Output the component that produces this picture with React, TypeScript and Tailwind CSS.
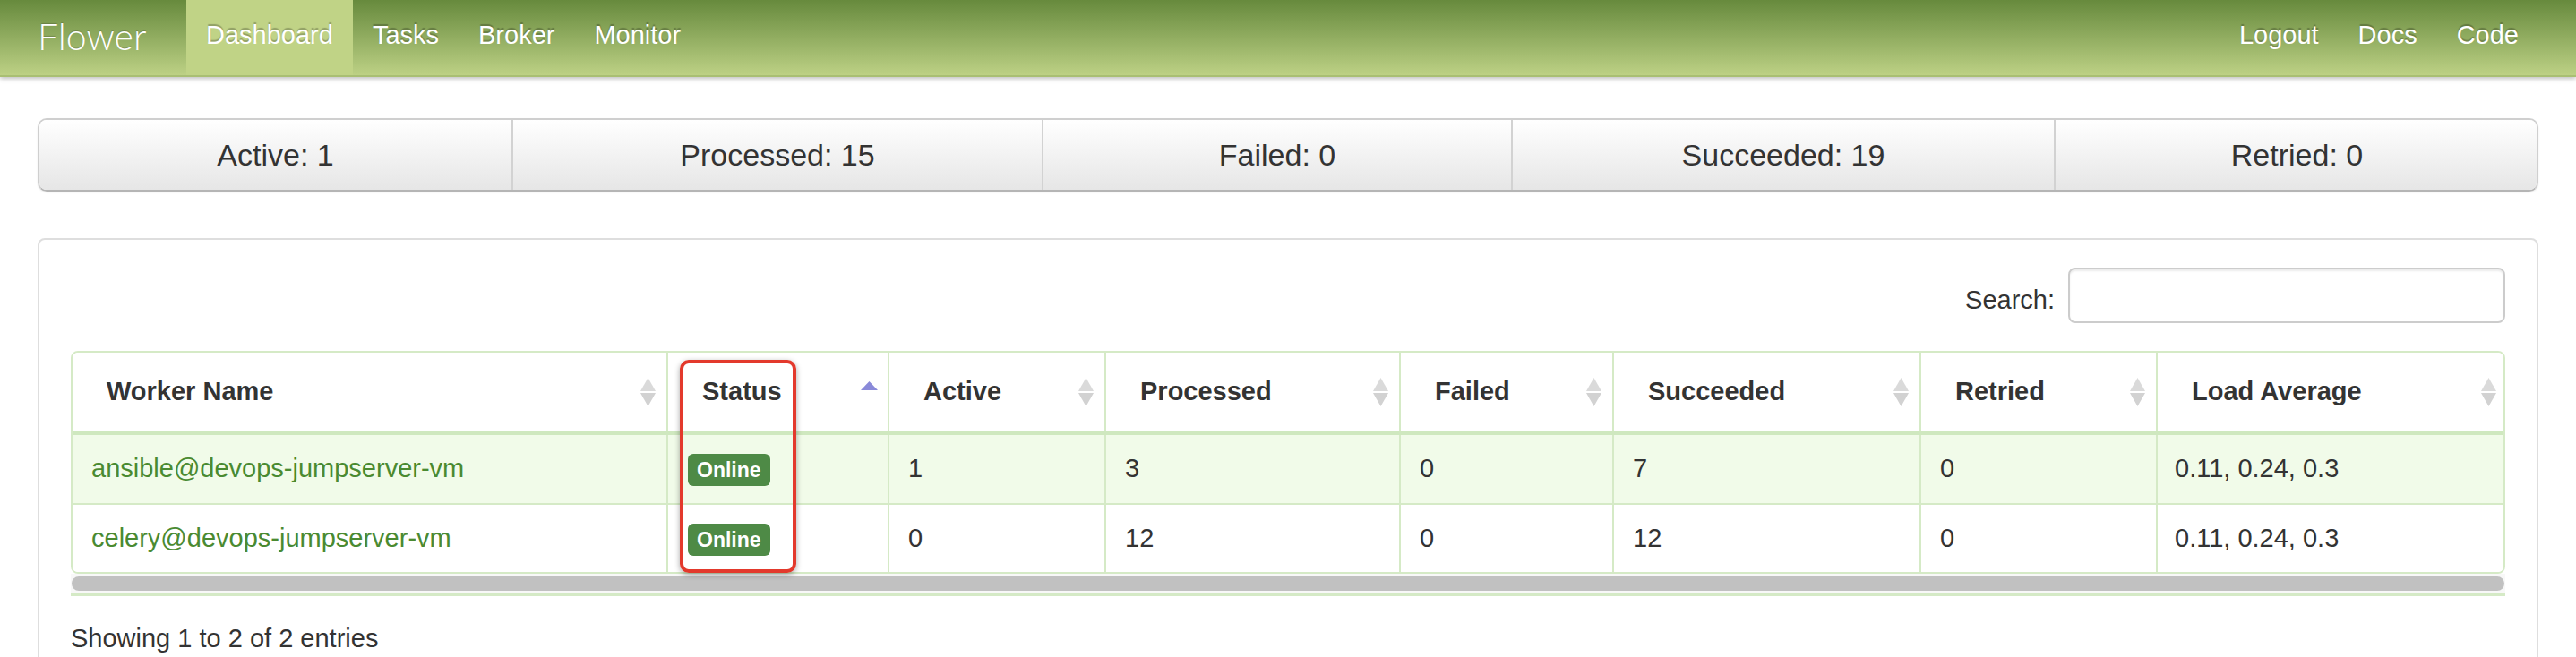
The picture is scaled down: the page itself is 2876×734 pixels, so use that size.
import React from 'react';

const stats = [
  { label: 'Active: 1', width: 'w-[527px]' },
  { label: 'Processed: 15', width: 'w-[592px]' },
  { label: 'Failed: 0', width: 'w-[524px]' },
  { label: 'Succeeded: 19', width: 'w-[606px]' },
  { label: 'Retried: 0', width: 'w-[541px]' },
];

const columns = [
  { name: 'Worker Name', width: 'w-[664px]', sort: 'both' },
  { name: 'Status', width: 'w-[247px]', sort: 'asc' },
  { name: 'Active', width: 'w-[242px]', sort: 'both' },
  { name: 'Processed', width: 'w-[329px]', sort: 'both' },
  { name: 'Failed', width: 'w-[238px]', sort: 'both' },
  { name: 'Succeeded', width: 'w-[343px]', sort: 'both' },
  { name: 'Retried', width: 'w-[264px]', sort: 'both' },
  { name: 'Load Average', width: 'w-[391px]', sort: 'both' },
];

const workers = [
  { name: 'ansible@devops-jumpserver-vm', active: 1, processed: 3, failed: 0, succeeded: 7, retried: 0, load: '0.11, 0.24, 0.3' },
  { name: 'celery@devops-jumpserver-vm', active: 0, processed: 12, failed: 0, succeeded: 12, retried: 0, load: '0.11, 0.24, 0.3' },
];

function SortIcon({ dir }: { dir: string }) {
  if (dir === 'asc') {
    return (
      <svg width="19" height="32" viewBox="0 0 19 32" className="shrink-0">
        <polygon points="9.5,4 19,14 0,14" fill="#8a8ad9" />
      </svg>
    );
  }
  return (
    <svg width="19" height="32" viewBox="0 0 19 32" className="shrink-0">
      <polygon points="9.5,0 18,15 1,15" fill="#dadada" />
      <polygon points="1,17 18,17 9.5,32" fill="#d2d2d2" />
    </svg>
  );
}

function NavLink({ label, active = false }: { label: string; active?: boolean }) {
  return (
    <li className="flex">
      <a
        className={
          'flex items-center px-[22px] pb-[4px] text-[29px] text-white [text-shadow:0_-2px_1px_rgba(0,0,0,0.25)] ' +
          (active ? 'bg-[#c0d386]' : '')
        }
      >
        {label}
      </a>
    </li>
  );
}

export default function App() {
  return (
    <div className="h-[734px] overflow-hidden bg-white font-['Liberation_Sans',Arial,sans-serif] text-[#333]">
      <nav className="h-[86px] border-b-2 border-[#a9bf73] bg-gradient-to-b from-[#678a3d] to-[#bdd185] shadow-[0_2px_5px_rgba(0,0,0,0.25)]">
        <div className="mx-[42px] flex h-full">
          <a className="flex w-[166px] items-center pb-[2px] font-['Lato',sans-serif] text-[41px] font-light text-white [text-shadow:0_-1px_1px_rgba(0,0,0,0.2)]">
            Flower
          </a>
          <ul className="flex">
            <NavLink label="Dashboard" active />
            <NavLink label="Tasks" />
            <NavLink label="Broker" />
            <NavLink label="Monitor" />
          </ul>
          <ul className="ml-auto flex">
            <NavLink label="Logout" />
            <NavLink label="Docs" />
            <NavLink label="Code" />
          </ul>
        </div>
      </nav>

      <div className="mx-[42px] mt-[46px]">
        {/* counters */}
        <div className="flex h-[82px] overflow-hidden rounded-[10px] border-2 border-[#cfcfcf] border-b-[#b5b5b5] shadow-[0_1px_2px_rgba(0,0,0,0.08)]">
          {stats.map((s, i) => (
            <div
              key={s.label}
              className={
                'flex shrink-0 items-center justify-center bg-gradient-to-b from-white to-[#e6e6e6] text-[34px] text-[#333] ' +
                s.width +
                (i > 0 ? ' border-l-2 border-[#d2d2d2]' : '')
              }
            >
              {s.label}
            </div>
          ))}
        </div>

        {/* workers panel */}
        <div className="mt-[52px] rounded-[8px] border-2 border-[#dedede] px-[35px] pt-[31px] pb-[80px]">
          <div className="flex items-center justify-end gap-[15px]">
            <label className="pt-[12px] text-[29px]">Search:</label>
            <input className="h-[62px] w-[488px] rounded-[8px] border-2 border-[#cccccc] bg-white shadow-[inset_0_2px_2px_rgba(0,0,0,0.08)]" />
          </div>

          <div className="relative mt-[31px]">
            <div className="overflow-hidden rounded-[8px] border-2 border-[#d5eac6]">
              <table className="w-full table-fixed border-collapse">
                <colgroup>
                  {columns.map((c) => (
                    <col key={c.name} className={c.width} />
                  ))}
                </colgroup>
                <thead>
                  <tr className="h-[90px] border-b-4 border-[#cfe8bf] bg-white">
                    {columns.map((c, i) => (
                      <th
                        key={c.name}
                        className={
                          'p-0 pl-[38px] pr-[11px] text-left align-middle text-[29px] font-bold text-[#333]' +
                          (i > 0 ? ' border-l-2 border-[#d5eac6]' : '')
                        }
                      >
                        <div className="flex items-center justify-between">
                          <span>{c.name}</span>
                          <SortIcon dir={c.sort} />
                        </div>
                      </th>
                    ))}
                  </tr>
                </thead>
                <tbody>
                  {workers.map((w, r) => (
                    <tr
                      key={w.name}
                      className={
                        'text-[29px] ' +
                        (r === 0 ? 'h-[79px] bg-[#f1fbe9]' : 'h-[76px] border-t-2 border-[#d5eac6] bg-white')
                      }
                    >
                      <td className="pl-[21px] align-middle text-[#4a8a31]">{w.name}</td>
                      <td className="border-l-2 border-[#d5eac6] pl-[22px] align-middle">
                        <span className="inline-block h-[36px] rounded-[6px] bg-[#4e8a46] px-[10px] text-[23px] leading-[36px] font-bold text-white">
                          Online
                        </span>
                      </td>
                      <td className="border-l-2 border-[#d5eac6] pl-[21px] align-middle">{w.active}</td>
                      <td className="border-l-2 border-[#d5eac6] pl-[21px] align-middle">{w.processed}</td>
                      <td className="border-l-2 border-[#d5eac6] pl-[21px] align-middle">{w.failed}</td>
                      <td className="border-l-2 border-[#d5eac6] pl-[21px] align-middle">{w.succeeded}</td>
                      <td className="border-l-2 border-[#d5eac6] pl-[21px] align-middle">{w.retried}</td>
                      <td className="border-l-2 border-[#d5eac6] pl-[19px] align-middle">{w.load}</td>
                    </tr>
                  ))}
                </tbody>
              </table>
            </div>

            {/* horizontal scrollbar */}
            <div className="flex h-[25px] items-center border-b-[3px] border-[#d5eac6] bg-[#f8f8f8] px-[1px]">
              <div className="h-[16px] w-full rounded-full bg-[#c1c1c1]" />
            </div>

            {/* annotation */}
            <div className="pointer-events-none absolute left-[680px] top-[10px] h-[238px] w-[130px] rounded-[10px] border-4 border-[#e3392c] shadow-[0_2px_6px_rgba(0,0,0,0.35)]" />
          </div>

          <p className="mt-[26px] text-[29px] text-[#333]">Showing 1 to 2 of 2 entries</p>
        </div>
      </div>
    </div>
  );
}
